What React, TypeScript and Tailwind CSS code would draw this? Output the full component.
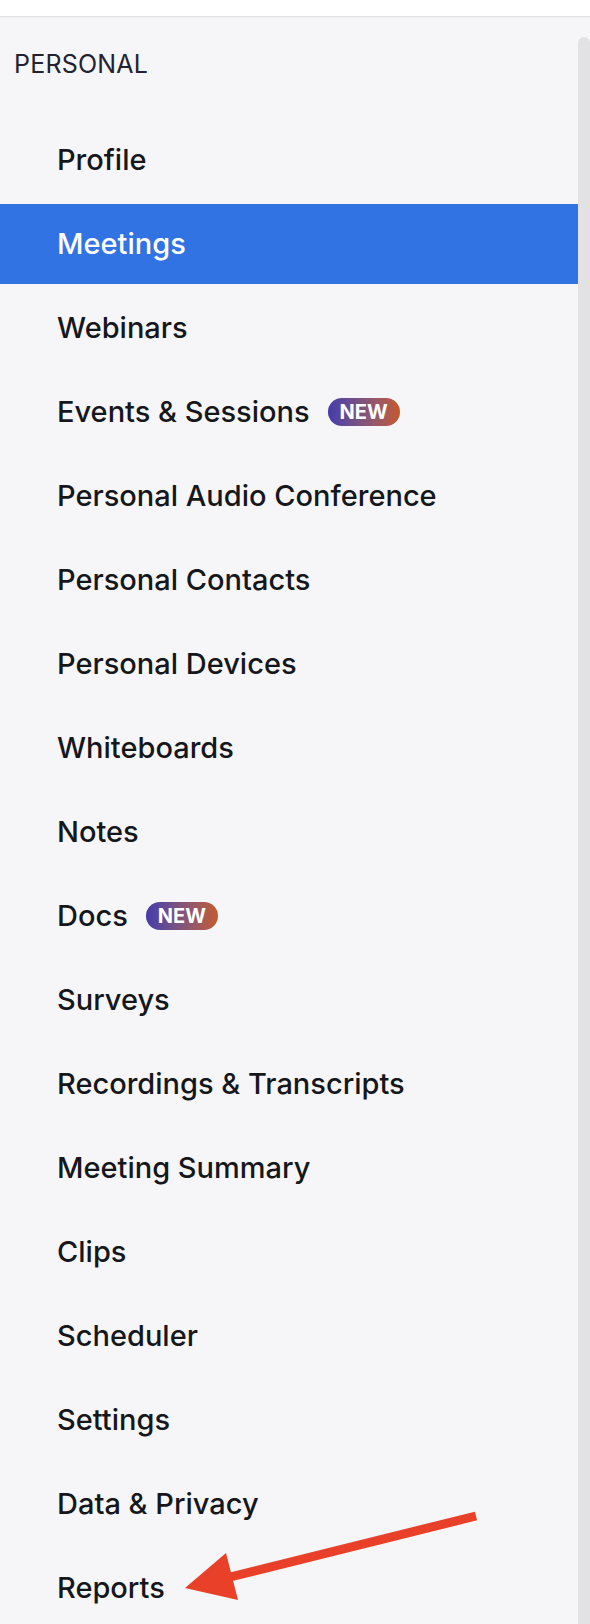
const items = [
  { label: "Profile" },
  { label: "Meetings", active: true },
  { label: "Webinars" },
  { label: "Events & Sessions", isNew: true },
  { label: "Personal Audio Conference" },
  { label: "Personal Contacts" },
  { label: "Personal Devices" },
  { label: "Whiteboards" },
  { label: "Notes" },
  { label: "Docs", isNew: true },
  { label: "Surveys" },
  { label: "Recordings & Transcripts" },
  { label: "Meeting Summary" },
  { label: "Clips" },
  { label: "Scheduler" },
  { label: "Settings" },
  { label: "Data & Privacy" },
  { label: "Reports" },
];

function NewBadge() {
  return (
    <span className="ml-[18px] inline-flex h-[28px] w-[72px] items-center justify-center rounded-full bg-gradient-to-r from-[#4639aa] to-[#c4592a] text-[20px] font-bold leading-none text-white">
      NEW
    </span>
  );
}

export default function App() {
  return (
    <div className="relative h-[1624px] w-[590px] overflow-hidden bg-[#f6f6f8] font-['Inter',sans-serif]">
      <div className="h-[17px] border-b border-[#e3e3e6] bg-white shadow-[0_1px_2px_rgba(0,0,0,0.04)]" />
      <div className="flex">
        <nav className="flex-1 pt-[31px]">
          <div className="mb-10 pl-[14px] text-[25px] leading-[32px] tracking-[0.2px] text-[#23232f]">
            PERSONAL
          </div>
          <ul className="flex flex-col gap-1">
            {items.map((item) => (
              <li
                key={item.label}
                className={
                  item.active
                    ? "flex h-[80px] items-center bg-[#3273e4] pl-[57px] text-[29px] font-medium text-white"
                    : "flex h-[80px] items-center pl-[57px] text-[29px] font-medium text-[#15171a]"
                }
              >
                {item.label}
                {item.isNew && <NewBadge />}
              </li>
            ))}
          </ul>
        </nav>
        <div className="mt-[20px] h-[1700px] w-[12px] rounded-t-full bg-[#e2e2e4]" />
      </div>

      {/* annotation arrow */}
      <svg className="pointer-events-none absolute left-0 top-0" width="590" height="1624">
        <line x1="476" y1="1516" x2="226" y2="1578" stroke="#e84029" strokeWidth="9" />
        <polygon points="185,1588 226,1553 238,1600" fill="#e84029" />
      </svg>
    </div>
  );
}
